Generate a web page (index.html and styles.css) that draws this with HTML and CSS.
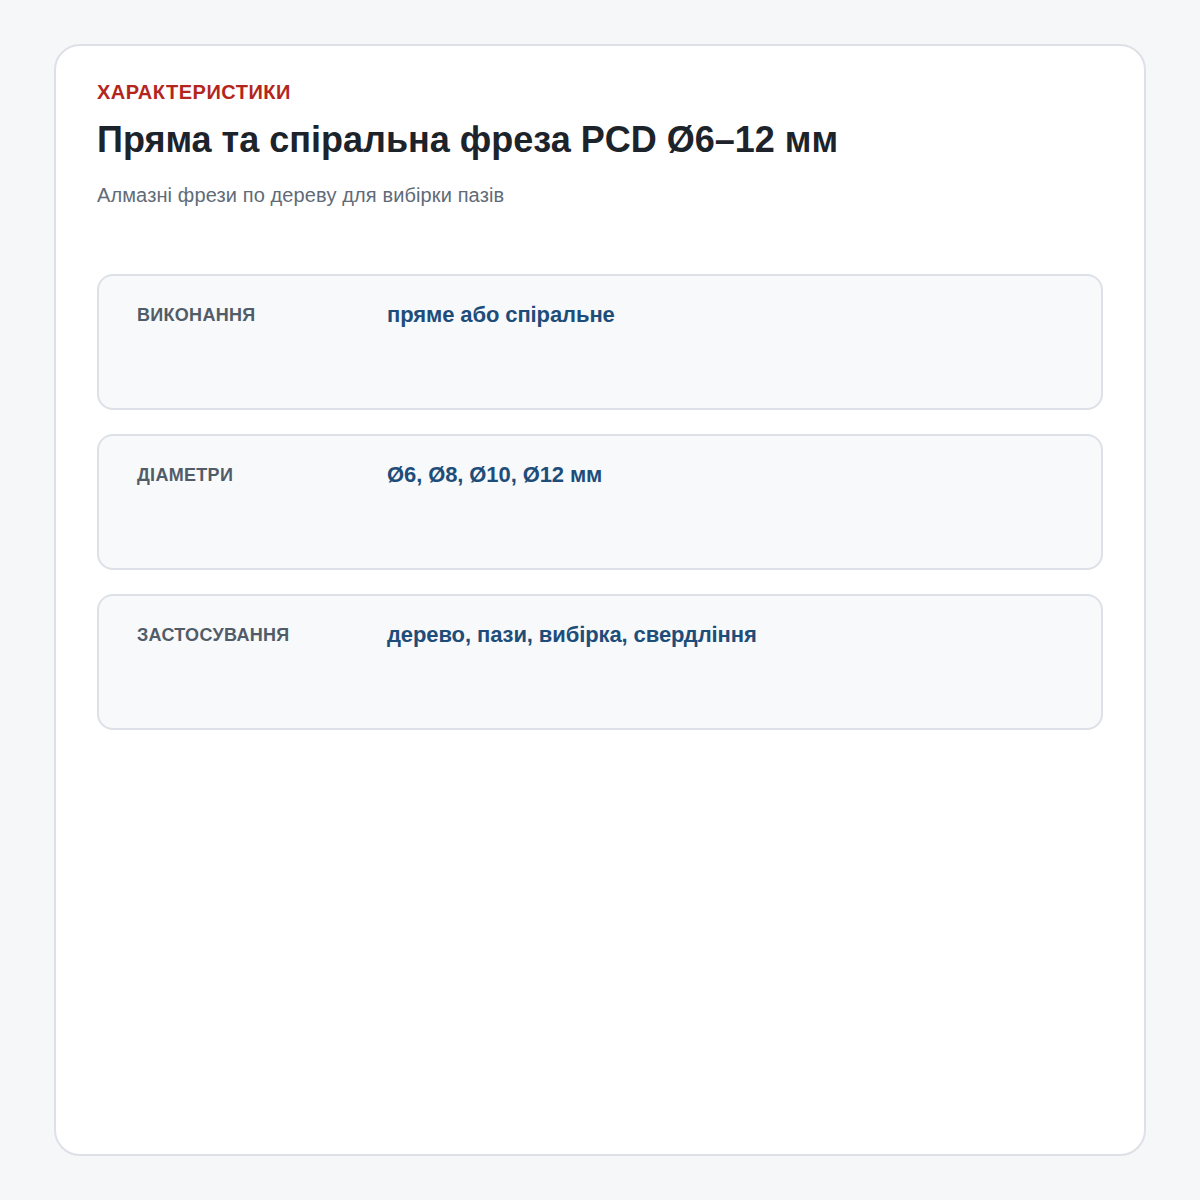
FILE: index.html
```html
<!DOCTYPE html>
<html lang="uk">
  <head>
    <meta charset="utf-8">
    <meta name="viewport" content="width=device-width, initial-scale=1.0">
    <title>Характеристики</title>
    <link rel="stylesheet" href="styles.css">
  </head>
  <body>
    <div class="spec-card">
      <div class="spec-eyebrow">ХАРАКТЕРИСТИКИ</div>
      <h1 class="spec-title">Пряма та спіральна фреза PCD Ø6–12 мм</h1>
      <p class="spec-subtitle">Алмазні фрези по дереву для вибірки пазів</p>
      <div class="spec-list">
        <div class="spec-row">
          <div class="spec-label">ВИКОНАННЯ</div>
          <div class="spec-value">пряме або спіральне</div>
        </div>
        <div class="spec-row">
          <div class="spec-label">ДІАМЕТРИ</div>
          <div class="spec-value">Ø6, Ø8, Ø10, Ø12 мм</div>
        </div>
        <div class="spec-row">
          <div class="spec-label">ЗАСТОСУВАННЯ</div>
          <div class="spec-value">дерево, пази, вибірка, свердління</div>
        </div>
      </div>
    </div>
  </body>
</html>
```

FILE: styles.css
```css
html, body {
  height: 100%;
}
body {
  margin: 0;
  padding: 44px 54px;
  box-sizing: border-box;
  background: #f5f7f9;
  font-family: "Liberation Sans", Arial, sans-serif;
}
.spec-card {
  height: 100%;
  box-sizing: border-box;
  background: white;
  border: 2px solid #dde1e7;
  border-radius: 26px;
  padding: 34px 41px;
}
.spec-eyebrow {
  font-size: 20px;
  line-height: 24px;
  font-weight: bold;
  color: #b3261e;
  letter-spacing: 0.5px;
}
.spec-title {
  margin: 14px 0 0;
  font-size: 36px;
  line-height: 44px;
  font-weight: bold;
  color: #1d232a;
}
.spec-subtitle {
  margin: 20px 0 0;
  font-size: 20px;
  line-height: 26px;
  color: #5f6b78;
  letter-spacing: 0.12px;
}
.spec-list {
  margin-top: 66px;
  display: flex;
  flex-direction: column;
  gap: 24px;
}
.spec-row {
  display: flex;
  min-height: 136px;
  box-sizing: border-box;
  padding: 24px 38px;
  background: #f7f9fb;
  border: 2px solid #dde1e7;
  border-radius: 16px;
}
.spec-label {
  width: 250px;
  flex-shrink: 0;
  padding-top: 3px;
  font-size: 18px;
  line-height: 24px;
  font-weight: bold;
  color: #525c68;
  letter-spacing: 0.3px;
}
.spec-value {
  font-size: 22px;
  line-height: 30px;
  font-weight: bold;
  color: #1f4d7a;
  letter-spacing: -0.1px;
}
```
